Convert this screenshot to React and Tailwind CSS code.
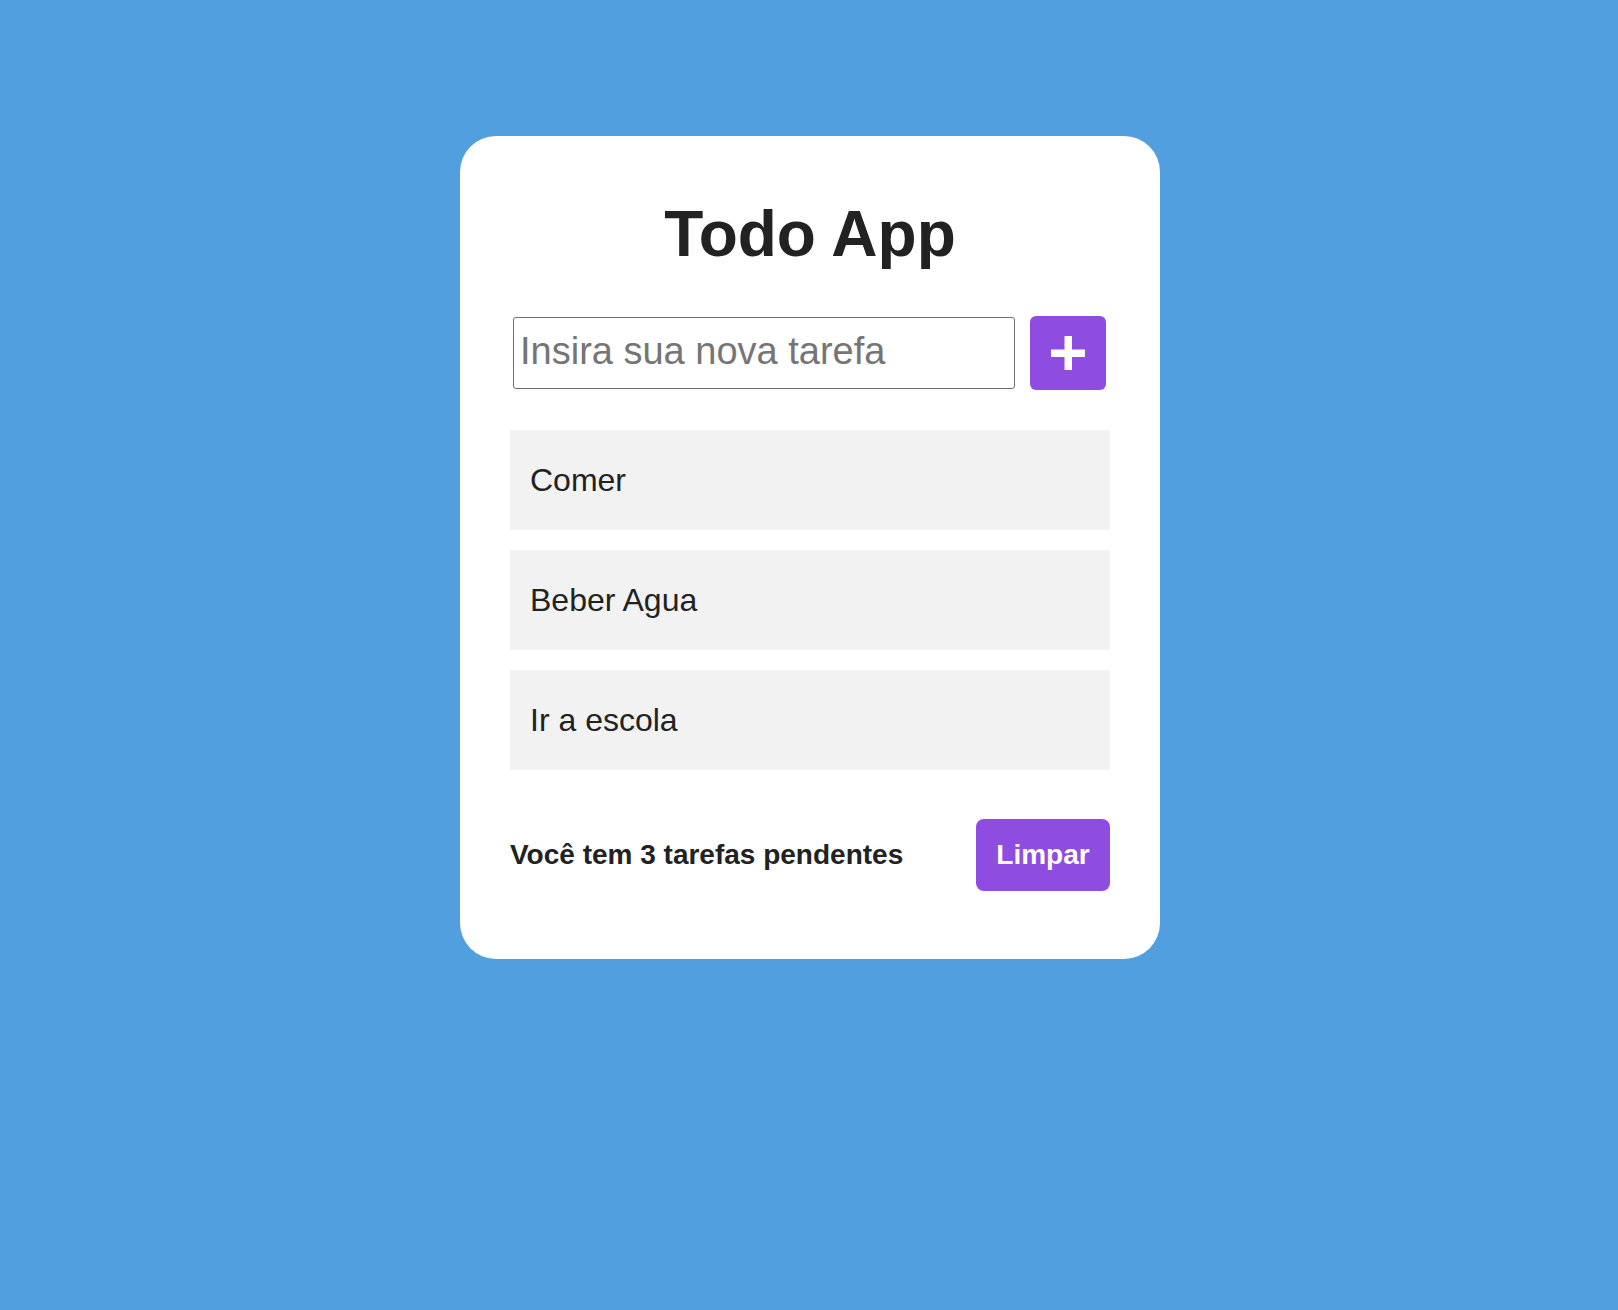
import { useState } from "react";

const PlusIcon = () => (
  <svg width="34" height="34" viewBox="0 0 34 34" fill="#ffffff">
    <rect x="0" y="13.5" width="34" height="7.5" />
    <rect x="13.5" y="0" width="7.5" height="34" />
  </svg>
);

const TodoItem = ({ text }) => (
  <li className="h-[100px] flex items-center px-5 bg-[#f2f2f2] text-[32px] text-[#222222]">
    {text}
  </li>
);

export default function App() {
  const [tarefa, setTarefa] = useState("");
  const [tarefas, setTarefas] = useState(["Comer", "Beber Agua", "Ir a escola"]);

  const adicionar = () => {
    if (!tarefa.trim()) return;
    setTarefas([...tarefas, tarefa.trim()]);
    setTarefa("");
  };

  return (
    <div
      className="min-h-screen bg-[#529fe0] pt-[136px] pl-[2px]"
      style={{ fontFamily: '"Liberation Sans", Arial, sans-serif' }}
    >
      <div className="mx-auto w-[700px] bg-white rounded-[36px] px-[50px] pt-[61px] pb-[68px]">
        <h1 className="text-center text-[64px] leading-[74px] font-bold text-[#222222]">
          Todo App
        </h1>

        <div className="mt-[45px] flex items-center h-[74px]">
          <input
            type="text"
            value={tarefa}
            onChange={(e) => setTarefa(e.target.value)}
            placeholder="Insira sua nova tarefa"
            className="ml-[3px] w-[502px] h-[72px] border-[1.5px] border-[#6f6f6f] rounded-[3px] pl-[6px] pb-[4px] text-[38px] text-[#222222] placeholder:text-[#757575] outline-none"
          />
          <button
            onClick={adicionar}
            className="ml-[15px] w-[76px] h-[74px] rounded-md bg-[#8e4ce0] flex items-center justify-center"
          >
            <PlusIcon />
          </button>
        </div>

        <ul className="mt-10 flex flex-col gap-5">
          {tarefas.map((t, i) => (
            <TodoItem key={i} text={t} />
          ))}
        </ul>

        <div className="mt-[49px] flex items-center justify-between">
          <span className="text-[28px] font-bold text-[#222222]">
            Você tem {tarefas.length} tarefas pendentes
          </span>
          <button
            onClick={() => setTarefas([])}
            className="w-[134px] h-[72px] rounded-lg bg-[#8e4ce0] text-white text-[28px] font-bold"
          >
            Limpar
          </button>
        </div>
      </div>
    </div>
  );
}
